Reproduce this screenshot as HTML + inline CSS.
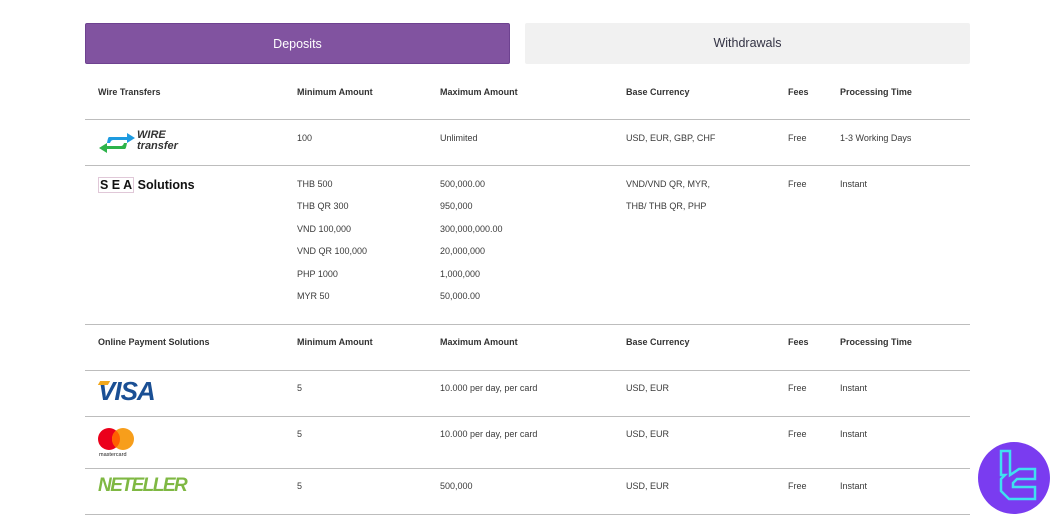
<!DOCTYPE html><html><head><style>
body{margin:0;width:1057px;height:522px;background:#fff;font-family:"Liberation Sans",sans-serif;position:relative;overflow:hidden;color:#3a3a3a}
.a{position:absolute;font-size:9px;line-height:12px;white-space:nowrap}
.b{font-weight:bold;color:#333}
.l{position:absolute;left:85px;width:885px;height:1px;background:#bdbdbd}
.tab{position:absolute;top:23px;height:41px;line-height:41px;text-align:center;font-size:12.5px;border-radius:2px}
</style></head><body>
<div class="tab" style="left:85px;width:425px;background:#8153a0;color:#fff;border:1px solid #6e4290;box-sizing:border-box">Deposits</div>
<div class="tab" style="left:525px;width:445px;background:#f1f1f1;color:#334">Withdrawals</div>

<div class="a b" style="left:98px;top:86px">Wire Transfers</div>
<div class="a b" style="left:297px;top:86px">Minimum Amount</div>
<div class="a b" style="left:440px;top:86px">Maximum Amount</div>
<div class="a b" style="left:626px;top:86px">Base Currency</div>
<div class="a b" style="left:788px;top:86px">Fees</div>
<div class="a b" style="left:840px;top:86px">Processing Time</div>
<div class="l" style="top:119px"></div>

<svg style="position:absolute;left:97px;top:131px" width="40" height="24" viewBox="0 0 40 24"><path d="M12 6 L30 6 L30 2 L38 7 L30 12 L30 9 L16 9 Q14 9 13 12 L10 12 Q11 6 12 6Z" fill="#1e9be0"/><path d="M28 18 L10 18 L10 22 L2 17 L10 12 L10 15 L24 15 Q26 15 27 12 L30 12 Q29 18 28 18Z" fill="#2db34a"/></svg>
<div class="a" style="left:137px;top:130px;font-size:11px;line-height:11px;font-weight:bold;font-style:italic;color:#333">WIRE<br>transfer</div>
<div class="a" style="left:297px;top:132px">100</div>
<div class="a" style="left:440px;top:132px">Unlimited</div>
<div class="a" style="left:626px;top:132px">USD, EUR, GBP, CHF</div>
<div class="a" style="left:788px;top:132px">Free</div>
<div class="a" style="left:840px;top:132px">1-3 Working Days</div>
<div class="l" style="top:165px"></div>

<div class="a" style="left:98px;top:178px;font-size:12.5px;line-height:15px;font-weight:bold;color:#111"><span style="border:1px solid #e0c8d8;padding:0 1px">S E A</span> Solutions</div>
<div class="a" style="left:297px;top:173px;line-height:22.4px">THB 500<br>THB QR 300<br>VND 100,000<br>VND QR 100,000<br>PHP 1000<br>MYR 50</div>
<div class="a" style="left:440px;top:173px;line-height:22.4px">500,000.00<br>950,000<br>300,000,000.00<br>20,000,000<br>1,000,000<br>50,000.00</div>
<div class="a" style="left:626px;top:173px;line-height:22.4px">VND/VND QR, MYR,<br>THB/ THB QR, PHP</div>
<div class="a" style="left:788px;top:178px">Free</div>
<div class="a" style="left:840px;top:178px">Instant</div>
<div class="l" style="top:324px"></div>

<div class="a b" style="left:98px;top:336px">Online Payment Solutions</div>
<div class="a b" style="left:297px;top:336px">Minimum Amount</div>
<div class="a b" style="left:440px;top:336px">Maximum Amount</div>
<div class="a b" style="left:626px;top:336px">Base Currency</div>
<div class="a b" style="left:788px;top:336px">Fees</div>
<div class="a b" style="left:840px;top:336px">Processing Time</div>
<div class="l" style="top:370px"></div>

<div class="a" style="left:98px;top:377px;font-size:26px;line-height:28px;font-weight:bold;font-style:italic;color:#1a4f94;letter-spacing:-1px">VISA</div>
<div style="position:absolute;left:99px;top:381px;width:10px;height:4px;background:#f2a81d;transform:skewX(-30deg)"></div>
<div class="a" style="left:297px;top:382px">5</div>
<div class="a" style="left:440px;top:382px">10.000 per day, per card</div>
<div class="a" style="left:626px;top:382px">USD, EUR</div>
<div class="a" style="left:788px;top:382px">Free</div>
<div class="a" style="left:840px;top:382px">Instant</div>
<div class="l" style="top:416px"></div>

<svg style="position:absolute;left:97px;top:427px" width="40" height="32"><circle cx="12" cy="12" r="11" fill="#eb001b"/><circle cx="26" cy="12" r="11" fill="#f79e1b"/><path d="M19 3.5 A11 11 0 0 1 19 20.5 A11 11 0 0 1 19 3.5Z" fill="#ff5f00"/><text x="2" y="29" font-size="5.5" font-family="Liberation Sans" fill="#222">mastercard</text></svg>
<div class="a" style="left:297px;top:428px">5</div>
<div class="a" style="left:440px;top:428px">10.000 per day, per card</div>
<div class="a" style="left:626px;top:428px">USD, EUR</div>
<div class="a" style="left:788px;top:428px">Free</div>
<div class="a" style="left:840px;top:428px">Instant</div>
<div class="l" style="top:468px"></div>

<div class="a" style="left:98px;top:476px;font-size:19px;line-height:20px;font-weight:bold;font-style:italic;color:#7fb843;letter-spacing:-1.5px">NETELLER</div>
<div class="a" style="left:297px;top:480px">5</div>
<div class="a" style="left:440px;top:480px">500,000</div>
<div class="a" style="left:626px;top:480px">USD, EUR</div>
<div class="a" style="left:788px;top:480px">Free</div>
<div class="a" style="left:840px;top:480px">Instant</div>
<div class="l" style="top:514px"></div>

<svg style="position:absolute;left:977px;top:441px" width="74" height="74" viewBox="0 0 74 74"><circle cx="37" cy="37" r="36" fill="#7a3cf0"/><path d="M24 10 L33 10 L33 34 L42 28 L58 28 L58 38 L40 38 L36 42 L36 46 L58 46 L58 58 L32 58 L24 50 L24 38 L28 34 L24 34Z" fill="none" stroke="#3fe0f0" stroke-width="2.5" stroke-linejoin="miter"/></svg>
</body></html>
